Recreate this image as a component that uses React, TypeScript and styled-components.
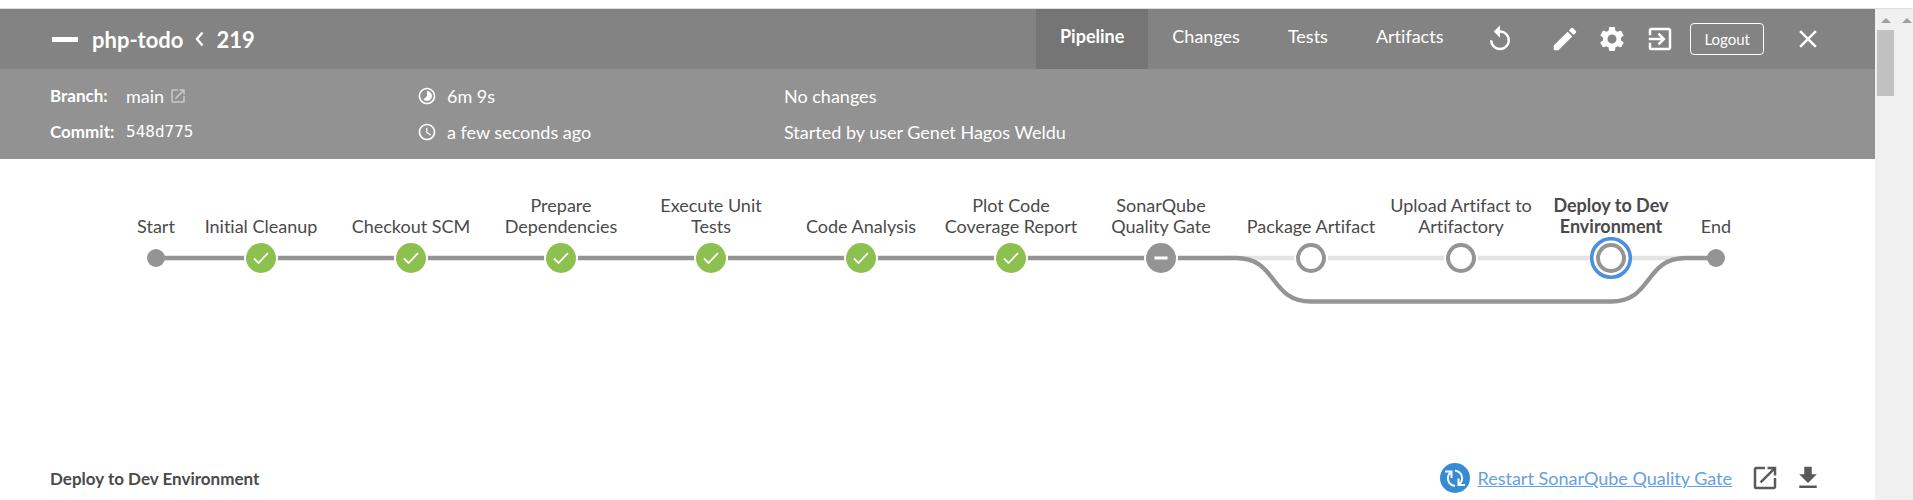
import React from "react";
import styled, { createGlobalStyle } from "styled-components";
import { MdReplay, MdEdit, MdSettings, MdExitToApp, MdClose, MdFileDownload, MdOpenInNew, MdTimelapse, MdSchedule } from "react-icons/md";

const GlobalStyle = createGlobalStyle`
  * { box-sizing: border-box; }
  body {
    margin: 0;
    background: #fff;
    font-family: Lato, "Liberation Sans", sans-serif;
    font-size: 18px;
    font-variant-ligatures: none;
    color: #4a4a4a;
  }
`;

const Frame = styled.div`
  display: flex;
  min-height: 100vh;
  flex-direction: column;
`;
const BrowserEdge = styled.div`
  height: 9px;
  flex: none;
  border-bottom: 1px solid #dedede;
`;
const Body = styled.div`
  display: flex;
  flex: 1;
`;
const Page = styled.main`
  flex: 1;
  min-width: 0;
`;
const ScrollRail = styled.div`
  width: 38px;
  flex: none;
  display: flex;
  background: #f0f0f0;
`;
const RailTrack = styled.div`
  width: 21px;
  flex: none;
  display: flex;
  flex-direction: column;
  align-items: center;
  padding-top: 9px;
  overflow: hidden;
`;
const RailArrow = styled.span`
  border: 5px solid transparent;
  border-top: 0;
  border-bottom: 5px solid #a0a0a0;
`;
const RailThumb = styled.span`
  width: 17px;
  height: 66px;
  margin-top: 7px;
  background: #c1c1c1;
`;

const TopBar = styled.header`
  display: flex;
  align-items: center;
  height: 60px;
  padding: 0 52px;
  background: #838383;
  color: #fff;
`;
const StatusDash = styled.span`
  width: 26px;
  height: 5px;
  background: #fff;
`;
const Title = styled.h1`
  display: flex;
  align-items: center;
  gap: 12px;
  margin: 0 auto 0 14px;
  font-size: 22px;
  font-weight: 700;
`;
const Tabs = styled.nav`
  display: flex;
  align-self: stretch;
`;
const Tab = styled.a<{ $active?: boolean }>`
  padding: 15px 24px;
  line-height: 24px;
  color: #fff;
  text-decoration: none;
  background: ${(p) => (p.$active ? "#757575" : "transparent")};
  font-weight: ${(p) => (p.$active ? 700 : 400)};
`;
const IconButton = styled.button<{ $gap?: number }>`
  display: flex;
  padding: 0;
  border: 0;
  margin-left: ${(p) => p.$gap ?? 0}px;
  background: none;
  color: inherit;
  cursor: pointer;
`;
const Logout = styled.button`
  height: 32px;
  padding: 0 13px;
  margin: 0 29px 0 15px;
  border: 1px solid #fff;
  border-radius: 4px;
  background: none;
  color: #fff;
  font: 400 15px Lato, "Liberation Sans", sans-serif;
  cursor: pointer;
`;

const Summary = styled.section`
  display: grid;
  grid-template-columns: 367px 367px 1fr;
  grid-auto-rows: 24px;
  row-gap: 12px;
  padding: 15px 50px;
  background: #929292;
  color: #fff;
  line-height: 24px;
`;
const Fact = styled.div`
  display: flex;
  align-items: center;
  gap: 10px;
`;
const FactLabel = styled.strong`
  width: 66px;
  font-size: 17px;
  white-space: nowrap;
`;
const Hash = styled.span`
  font-family: "DejaVu Sans Mono", monospace;
  font-size: 16px;
`;
const BranchLink = styled.a`
  display: flex;
  align-items: center;
  gap: 5px;
  color: inherit;
  text-decoration: none;
  svg { opacity: 0.5; }
`;

const Graph = styled.section`
  padding: 34px 0 0 126px;
  overflow: hidden;
`;
const Labels = styled.ol`
  display: grid;
  grid-template-columns: 60px repeat(10, 150px) 60px;
  align-items: end;
  height: 44px;
  margin: 0;
  padding: 0;
  list-style: none;
  text-align: center;
  line-height: 21px;
`;
const Label = styled.li<{ $selected?: boolean }>`
  white-space: pre-line;
  font-weight: ${(p) => (p.$selected ? 700 : 400)};
`;
const Drawing = styled.svg`
  display: block;
`;

const StepBar = styled.section`
  display: flex;
  align-items: center;
  padding: 156px 52px 0 50px;
`;
const StepTitle = styled.h2`
  margin: 0 auto 0 0;
  font-size: 17px;
  font-weight: 700;
`;
const Restart = styled.a`
  display: flex;
  align-items: center;
  gap: 7px;
  color: #64a0e8;
`;
const StepIcon = styled(IconButton)`
  color: #5a5a5a;
`;

type Kind = "start" | "success" | "aborted" | "skipped" | "selected" | "end";
const stages: { name: string; kind: Kind; x: number }[] = [
  { name: "Start", kind: "start", x: 30 },
  { name: "Initial Cleanup", kind: "success", x: 135 },
  { name: "Checkout SCM", kind: "success", x: 285 },
  { name: "Prepare\nDependencies", kind: "success", x: 435 },
  { name: "Execute Unit\nTests", kind: "success", x: 585 },
  { name: "Code Analysis", kind: "success", x: 735 },
  { name: "Plot Code\nCoverage Report", kind: "success", x: 885 },
  { name: "SonarQube\nQuality Gate", kind: "aborted", x: 1035 },
  { name: "Package Artifact", kind: "skipped", x: 1185 },
  { name: "Upload Artifact to\nArtifactory", kind: "skipped", x: 1335 },
  { name: "Deploy to Dev\nEnvironment", kind: "selected", x: 1485 },
  { name: "End", kind: "end", x: 1590 },
];

function Node({ kind, x }: { kind: Kind; x: number }) {
  if (kind === "start" || kind === "end") return <circle cx={x} cy={21} r={9} fill="#949494" />;
  if (kind === "success" || kind === "aborted")
    return (
      <g transform={`translate(${x} 21)`}>
        <circle r={17} fill="#fff" />
        <circle r={15} fill={kind === "success" ? "#8cc04f" : "#949494"} />
        {kind === "success" ? (
          <path d="M-7 0.5L-2.5 5L7 -5" fill="none" stroke="#fff" strokeWidth={1.8} />
        ) : (
          <rect x={-6.5} y={-1.5} width={13} height={3} fill="#fff" />
        )}
      </g>
    );
  return (
    <g transform={`translate(${x} 21)`}>
      <circle r={17} fill="#fff" />
      {kind === "selected" && <circle r={19.3} fill="#fff" stroke="#4a90e2" strokeWidth={3.6} />}
      <circle r={13} fill="#fff" stroke="#949494" strokeWidth={4} />
    </g>
  );
}

export default function App() {
  return (
    <>
      <GlobalStyle />
      <Frame>
        <BrowserEdge />
        <Body>
          <Page>
            <TopBar>
              <StatusDash />
              <Title>
                php-todo
                <svg width="9" height="16" viewBox="0 0 9 16" fill="none" stroke="#fff" strokeWidth="2.4"><path d="M7.500 1.500L2 8L7.500 14.500" /></svg>
                219
              </Title>
              <Tabs>
                <Tab href="#pipeline" $active>Pipeline</Tab>
                <Tab href="#changes">Changes</Tab>
                <Tab href="#tests">Tests</Tab>
                <Tab href="#artifacts">Artifacts</Tab>
              </Tabs>
              <IconButton aria-label="Rerun" $gap={18}><MdReplay size={30} /></IconButton>
              <IconButton aria-label="Edit" $gap={35}><MdEdit size={30} /></IconButton>
              <IconButton aria-label="Settings" $gap={17}><MdSettings size={30} /></IconButton>
              <IconButton aria-label="Go to classic" $gap={18}><MdExitToApp size={30} /></IconButton>
              <Logout>Logout</Logout>
              <IconButton aria-label="Close"><MdClose size={30} /></IconButton>
            </TopBar>
            <Summary>
              <Fact><FactLabel>Branch:</FactLabel><BranchLink href="#branch">main <MdOpenInNew size={18} /></BranchLink></Fact>
              <Fact><MdTimelapse size={20} />6m 9s</Fact>
              <Fact>No changes</Fact>
              <Fact><FactLabel>Commit:</FactLabel><Hash>548d775</Hash></Fact>
              <Fact><MdSchedule size={20} />a few seconds ago</Fact>
              <Fact>Started by user Genet Hagos Weldu</Fact>
            </Summary>
            <Graph>
              <Labels>
                {stages.map((s) => <Label key={s.name} $selected={s.kind === "selected"}>{s.name}</Label>)}
              </Labels>
              <Drawing width="1620" height="70" aria-hidden="true">
                <g fill="none" strokeWidth={4.4}>
                  <path d="M1095 21H1560" stroke="#e4e4e4" />
                  <path d="M30 21H1110C1152 21 1143 64.5 1185 64.5H1485C1527 64.5 1518 21 1560 21H1590" stroke="#949494" />
                </g>
                {stages.map((s) => <Node key={s.name} kind={s.kind} x={s.x} />)}
              </Drawing>
            </Graph>
            <StepBar>
              <StepTitle>Deploy to Dev Environment</StepTitle>
              <Restart href="#restart">
                <svg width="30" height="30" viewBox="0 0 30 30" fill="none">
                  <circle cx="15" cy="15" r="15" fill="#368bd6" />
                  <path d="M5 8.5H11.5V15M11 9C6 13 7 21.5 15 23M25 22H18.5V15.500M19 21.500C24 17.500 23 9 15 7.500" stroke="#fff" strokeWidth="2" />
                </svg>
                Restart SonarQube Quality Gate
              </Restart>
              <StepIcon aria-label="Open log" $gap={18}><MdOpenInNew size={30} /></StepIcon>
              <StepIcon aria-label="Download log" $gap={13}><MdFileDownload size={30} /></StepIcon>
            </StepBar>
          </Page>
          <ScrollRail aria-hidden="true">
            <RailTrack><RailArrow /><RailThumb /></RailTrack>
            <RailTrack><RailArrow /></RailTrack>
          </ScrollRail>
        </Body>
      </Frame>
    </>
  );
}
